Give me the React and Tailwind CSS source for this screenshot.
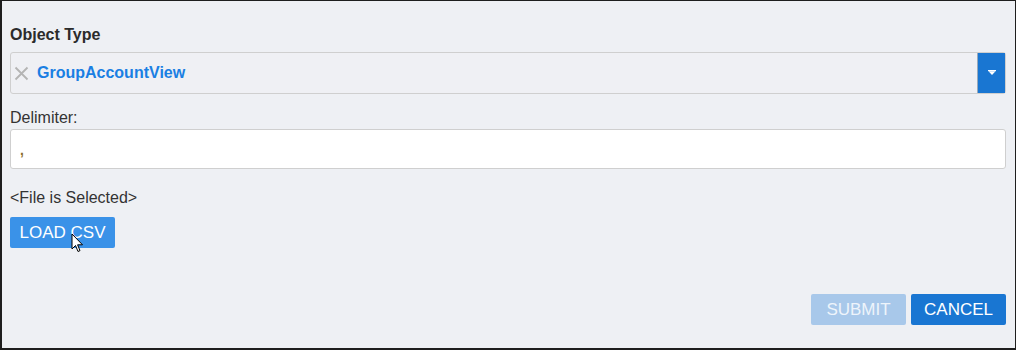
import React from "react";

export default function App() {
  return (
    <div
      className="w-[1016px] h-[350px] bg-[#eef0f4] border-t border-r border-l-2 border-b-2 border-[#1e1e1e] box-border relative text-[#333333]"
      style={{ fontFamily: '"Liberation Sans", Arial, sans-serif' }}
    >
      <div className="flex flex-col pl-[8px] pr-[9px]">
        <div className="mt-[24px] h-[20px] leading-[20px] text-[16px] font-bold text-[#2b2b2b]">Object Type</div>
        <div className="mt-[7px] h-[42px] flex items-stretch border border-[#cfcfcf] rounded-[3px] bg-[#eff0f4]">
          <div className="flex items-center flex-1 pl-[3px]">
            <svg width="15" height="15" viewBox="0 0 15 15">
              <path d="M1.5 1.5 L13.5 13.5 M13.5 1.5 L1.5 13.5" stroke="#b4b4b4" strokeWidth="1.8" />
            </svg>
            <span className="ml-[8px] text-[16px] font-bold text-[#1a7fe3]">GroupAccountView</span>
          </div>
          <div className="w-[28px] bg-[#1976d2] flex items-center justify-center border-l border-[#9ab]">
            <svg width="10" height="8" viewBox="0 0 10 8">
              <rect x="1" y="1" width="8" height="1.2" fill="#fff" />
              <path d="M1.5 2.2 L8.5 2.2 L5 6 Z" fill="#fff" />
            </svg>
          </div>
        </div>
        <div className="mt-[14px] h-[20px] leading-[20px] text-[16px] text-[#333]">Delimiter:</div>
        <div className="mt-[1px] h-[40px] bg-white border border-[#cfcfcf] rounded-[3px] flex items-center pl-[9px]">
          <span className="text-[14px] text-[#8a6d2b] font-bold mt-[2px]">,</span>
        </div>
        <div className="mt-[19px] h-[20px] leading-[20px] text-[16px] text-[#333]">&lt;File is Selected&gt;</div>
        <div className="mt-[9px]">
          <button className="h-[31px] w-[105px] bg-[#3a92e8] text-white text-[17px] rounded-[2px] flex items-center justify-center">
            LOAD CSV
          </button>
        </div>
        <div className="mt-[46px] flex justify-end gap-[5px]">
          <button className="h-[31px] w-[95px] bg-[#a8c8ea] text-[#eef4fb] text-[17px] rounded-[2px] flex items-center justify-center">
            SUBMIT
          </button>
          <button className="h-[31px] w-[95px] bg-[#1976d2] text-white text-[17px] rounded-[2px] flex items-center justify-center">
            CANCEL
          </button>
        </div>
      </div>
      <svg
        className="absolute left-[69px] top-[232px]"
        width="13"
        height="21"
        viewBox="0 0 13 21"
      >
        <path
          d="M1 1 L1 16 L4.5 12.5 L7 18.5 L9 17.6 L6.6 11.8 L11.5 11.8 Z"
          fill="#ffffff"
          stroke="#000000"
          strokeWidth="1"
          strokeLinejoin="miter"
        />
      </svg>
    </div>
  );
}
